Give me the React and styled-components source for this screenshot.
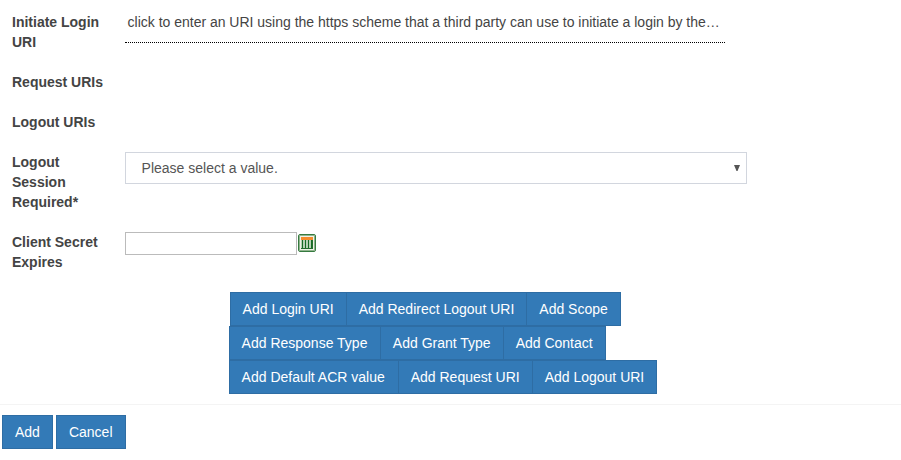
import React from "react";
import styled, { createGlobalStyle } from "styled-components";

const Global = createGlobalStyle`
  *{box-sizing:border-box}
  body{margin:0;background:#fff;color:#444;font:14px/20px "Liberation Sans",Arial,sans-serif}
`;
const Page = styled.main`width:901px;height:460px;overflow:hidden;padding-top:12px;`;
const Row = styled.div`display:flex;padding-left:12px;margin-bottom:20px;`;
const Label = styled.label`width:95px;margin-right:17.6px;flex:none;font-weight:700;`;
const Inline = styled.span`
  width:600px;height:31px;margin-bottom:-11px;padding-left:3px;border-bottom:1px dotted #000;
  white-space:nowrap;word-spacing:-0.04px;
`;
const Select = styled.div`
  width:622px;height:32px;padding:0 5px 0 16px;border:1px solid #d2d6de;display:flex;
  align-items:center;justify-content:space-between;color:#555;
`;
const DateField = styled.div`display:flex;align-items:flex-start;gap:1px;height:23px;`;
const Input = styled.input`width:172px;height:23px;border:1px solid #bbb;padding:1px 4px;font:inherit;`;
const Calendar = styled.svg`width:18px;height:18px;margin-top:2px;`;
const Actions = styled.div`display:flex;flex-direction:column;align-items:flex-start;margin:20px 0 10px 228.6px;`;
const Button = styled.button`
  height:34px;padding:0 12px;border:1px solid #2e6da4;background:#337ab7;color:#fff;
  font:inherit;white-space:nowrap;
`;
const Group = styled.div`
  display:flex;padding-left:${p => p.$inset}px;
  ${Button}:first-child{padding-right:${p => 12 + p.$extra}px}
  ${Button} + ${Button}{margin-left:-1px}
`;
const Footer = styled.footer`display:flex;gap:3px;border-top:1px solid #f4f4f4;padding:10px 2px;`;

const groups = [
  [1, 0, ["Add Login URI", "Add Redirect Logout URI", "Add Scope"]],
  [0, 0.4, ["Add Response Type", "Add Grant Type", "Add Contact"]],
  [0, 0.9, ["Add Default ACR value", "Add Request URI", "Add Logout URI"]],
];

export default function App() {
  return <Page><Global />
    <Row><Label>Initiate Login URI</Label><Inline>click to enter an URI using the https scheme that a third party can use to initiate a login by the…</Inline></Row>
    <Row><Label>Request URIs</Label></Row>
    <Row><Label>Logout URIs</Label></Row>
    <Row><Label>Logout Session Required*</Label><Select>Please select a value.<svg width="8" height="6"><path d="M1 0H7L4.5 6H3.5Z" fill="#555" /></svg></Select></Row>
    <Row><Label>Client Secret Expires</Label><DateField><Input />
      <Calendar viewBox="0 0 18 18">
        <rect x=".5" y=".5" width="17" height="17" rx="1.5" fill="#fff" stroke="#367a40" />
        <rect x="1.5" y="1.5" width="15" height="15" fill="#eef3e6" stroke="#91b58e" />
        <path d="M3 3H15V6H3Z" fill="#f58b2c" />
        <path d="M4.5 6V15M7.5 6V15M10.5 6V15M13.5 6V15" fill="none" stroke="#176b25" strokeWidth="1.5" />
        <path d="M3 14.5H15M14.5 6V15" fill="none" stroke="#246d2d" />
      </Calendar>
    </DateField></Row>
    <Actions>{groups.map(([inset, extra, names]) => <Group key={names[0]} $inset={inset} $extra={extra}>{names.map(n => <Button key={n}>{n}</Button>)}</Group>)}</Actions>
    <Footer><Button>Add</Button><Button>Cancel</Button></Footer>
  </Page>;
}
